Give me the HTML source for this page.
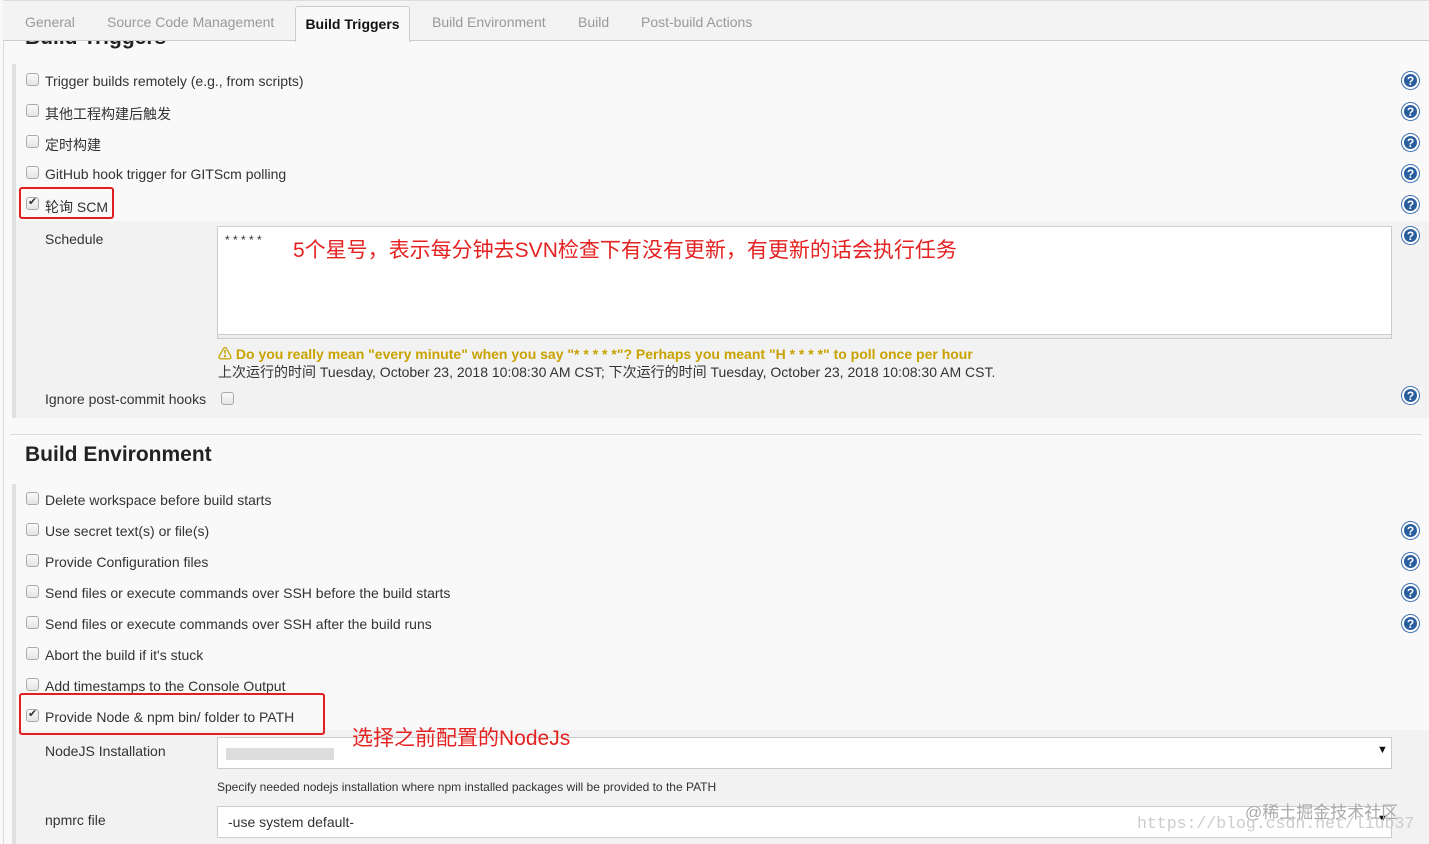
<!DOCTYPE html>
<html><head><meta charset="utf-8"><style>
*{margin:0;padding:0;box-sizing:border-box}
body{width:1429px;height:844px;overflow:hidden;background:#f9f9f9;font-family:"Liberation Sans","Noto Sans CJK SC",sans-serif;font-size:14px;color:#333;position:relative}
.a{position:absolute;white-space:nowrap}
.cb{position:absolute;width:13px;height:13px;border:1px solid #aaa;border-radius:3px;background:linear-gradient(#fafafa,#e4e4e4)}
.cb.on::after{content:"✔";position:absolute;left:1px;top:-3px;font-size:11px;color:#333}
.help{position:absolute;left:1402px;width:17px;height:17px;border-radius:50%;background:#2a5d9e;border:2px solid #fff;box-shadow:0 0 0 1px #3b6fb0;color:#fff;font:bold 12px "Liberation Sans",sans-serif;text-align:center;line-height:14px}
.red{position:absolute;border:2px solid #e02020;border-radius:3px}
.tab{position:absolute;top:0;height:40px;line-height:44px;color:#999;font-size:14px}
</style></head><body>
<div class="a" style="left:3px;top:0;width:1px;height:844px;background:#ddd"></div>
<div class="a" style="left:25px;top:26px;font-size:21px;font-weight:bold;color:#222">Build Triggers</div>
<div class="a" style="left:3px;top:0;width:1426px;height:41px;background:#f3f3f3;border-bottom:1px solid #ccc;border-top:1px solid #ddd"></div>
<div class="tab" style="left:25px">General</div>
<div class="tab" style="left:107px">Source Code Management</div>
<div class="a" style="left:295px;top:6px;width:115px;height:36px;background:#f9f9f9;border:1px solid #ccc;border-bottom:none;border-radius:3px 3px 0 0;font-weight:bold;color:#111;line-height:34px;text-align:center">Build Triggers</div>
<div class="tab" style="left:432px">Build Environment</div>
<div class="tab" style="left:578px">Build</div>
<div class="tab" style="left:641px">Post-build Actions</div>

<div class="a" style="left:12px;top:64px;width:4px;height:354px;background:#e0e0e0"></div>
<div class="a" style="left:16px;top:221px;width:1413px;height:197px;background:#f2f2f2"></div>
<div class="cb" style="left:26px;top:73px"></div><div class="a" style="left:45px;top:73px">Trigger builds remotely (e.g., from scripts)</div>
<div class="cb" style="left:26px;top:104px"></div><div class="a" style="left:45px;top:104px">其他工程构建后触发</div>
<div class="cb" style="left:26px;top:135px"></div><div class="a" style="left:45px;top:135px">定时构建</div>
<div class="cb" style="left:26px;top:166px"></div><div class="a" style="left:45px;top:166px">GitHub hook trigger for GITScm polling</div>
<div class="cb on" style="left:26px;top:197px"></div><div class="a" style="left:45px;top:197px">轮询 SCM</div>
<div class="red" style="left:19px;top:187px;width:95px;height:32px"></div>
<div class="a" style="left:45px;top:231px">Schedule</div>
<div class="a" style="left:217px;top:226px;width:1175px;height:109px;background:#fff;border:1px solid #ccc;font-size:12px;padding:6px 7px">* * * * *</div>
<div class="a" style="left:217px;top:334px;width:1175px;height:5px;background:#eee;border:1px solid #ccc"></div>
<div class="a" style="left:293px;top:234px;color:#e52222;font-size:21px">5个星号，表示每分钟去SVN检查下有没有更新，有更新的话会执行任务</div>
<div class="a" style="left:218px;top:344px;color:#c9a200;font-weight:bold;font-size:14px">⚠ Do you really mean "every minute" when you say "* * * * *"? Perhaps you meant "H * * * *" to poll once per hour</div>
<div class="a" style="left:218px;top:362px;font-size:14px">上次运行的时间 Tuesday, October 23, 2018 10:08:30 AM CST; 下次运行的时间 Tuesday, October 23, 2018 10:08:30 AM CST.</div>
<div class="a" style="left:45px;top:391px">Ignore post-commit hooks</div><div class="cb" style="left:221px;top:392px"></div>
<div class="help" style="top:72px">?</div><div class="help" style="top:103px">?</div><div class="help" style="top:134px">?</div><div class="help" style="top:165px">?</div><div class="help" style="top:196px">?</div><div class="help" style="top:227px">?</div><div class="help" style="top:387px">?</div>

<div class="a" style="left:10px;top:434px;width:1412px;height:1px;background:#ddd"></div>
<div class="a" style="left:25px;top:443px;font-size:21px;font-weight:bold;color:#222">Build Environment</div>
<div class="a" style="left:12px;top:484px;width:4px;height:360px;background:#e0e0e0"></div>
<div class="a" style="left:16px;top:730px;width:1413px;height:114px;background:#f2f2f2"></div>
<div class="cb" style="left:26px;top:492px"></div><div class="a" style="left:45px;top:492px">Delete workspace before build starts</div>
<div class="cb" style="left:26px;top:523px"></div><div class="a" style="left:45px;top:523px">Use secret text(s) or file(s)</div>
<div class="cb" style="left:26px;top:554px"></div><div class="a" style="left:45px;top:554px">Provide Configuration files</div>
<div class="cb" style="left:26px;top:585px"></div><div class="a" style="left:45px;top:585px">Send files or execute commands over SSH before the build starts</div>
<div class="cb" style="left:26px;top:616px"></div><div class="a" style="left:45px;top:616px">Send files or execute commands over SSH after the build runs</div>
<div class="cb" style="left:26px;top:647px"></div><div class="a" style="left:45px;top:647px">Abort the build if it's stuck</div>
<div class="cb" style="left:26px;top:678px"></div><div class="a" style="left:45px;top:678px">Add timestamps to the Console Output</div>
<div class="cb on" style="left:26px;top:709px"></div><div class="a" style="left:45px;top:709px">Provide Node &amp; npm bin/ folder to PATH</div>
<div class="red" style="left:19px;top:693px;width:306px;height:42px"></div>
<div class="help" style="top:522px">?</div><div class="help" style="top:553px">?</div><div class="help" style="top:584px">?</div><div class="help" style="top:615px">?</div>
<div class="a" style="left:45px;top:743px">NodeJS Installation</div>
<div class="a" style="left:217px;top:737px;width:1175px;height:32px;background:#fff;border:1px solid #ccc"></div>
<div class="a" style="left:226px;top:748px;width:108px;height:12px;background:#ddd"></div>
<div class="a" style="left:1377px;top:744px;font-size:11px;color:#111">▼</div>
<div class="a" style="left:352px;top:722px;color:#e52222;font-size:21px">选择之前配置的NodeJs</div>
<div class="a" style="left:217px;top:780px;font-size:12px">Specify needed nodejs installation where npm installed packages will be provided to the PATH</div>
<div class="a" style="left:45px;top:812px">npmrc file</div>
<div class="a" style="left:217px;top:806px;width:1175px;height:32px;background:#fff;border:1px solid #ccc;padding:7px 10px">-use system default-</div>
<div class="a" style="left:1377px;top:813px;font-size:11px;color:#111">▼</div>
<div class="a" style="left:1245px;top:798px;font-size:17px;color:#aaa">@稀土掘金技术社区</div>
<div class="a" style="left:1137px;top:814px;font-family:'Liberation Mono',monospace;font-size:16.5px;color:#ccc">https://blog.csdn.net/liub37</div>
</body></html>
